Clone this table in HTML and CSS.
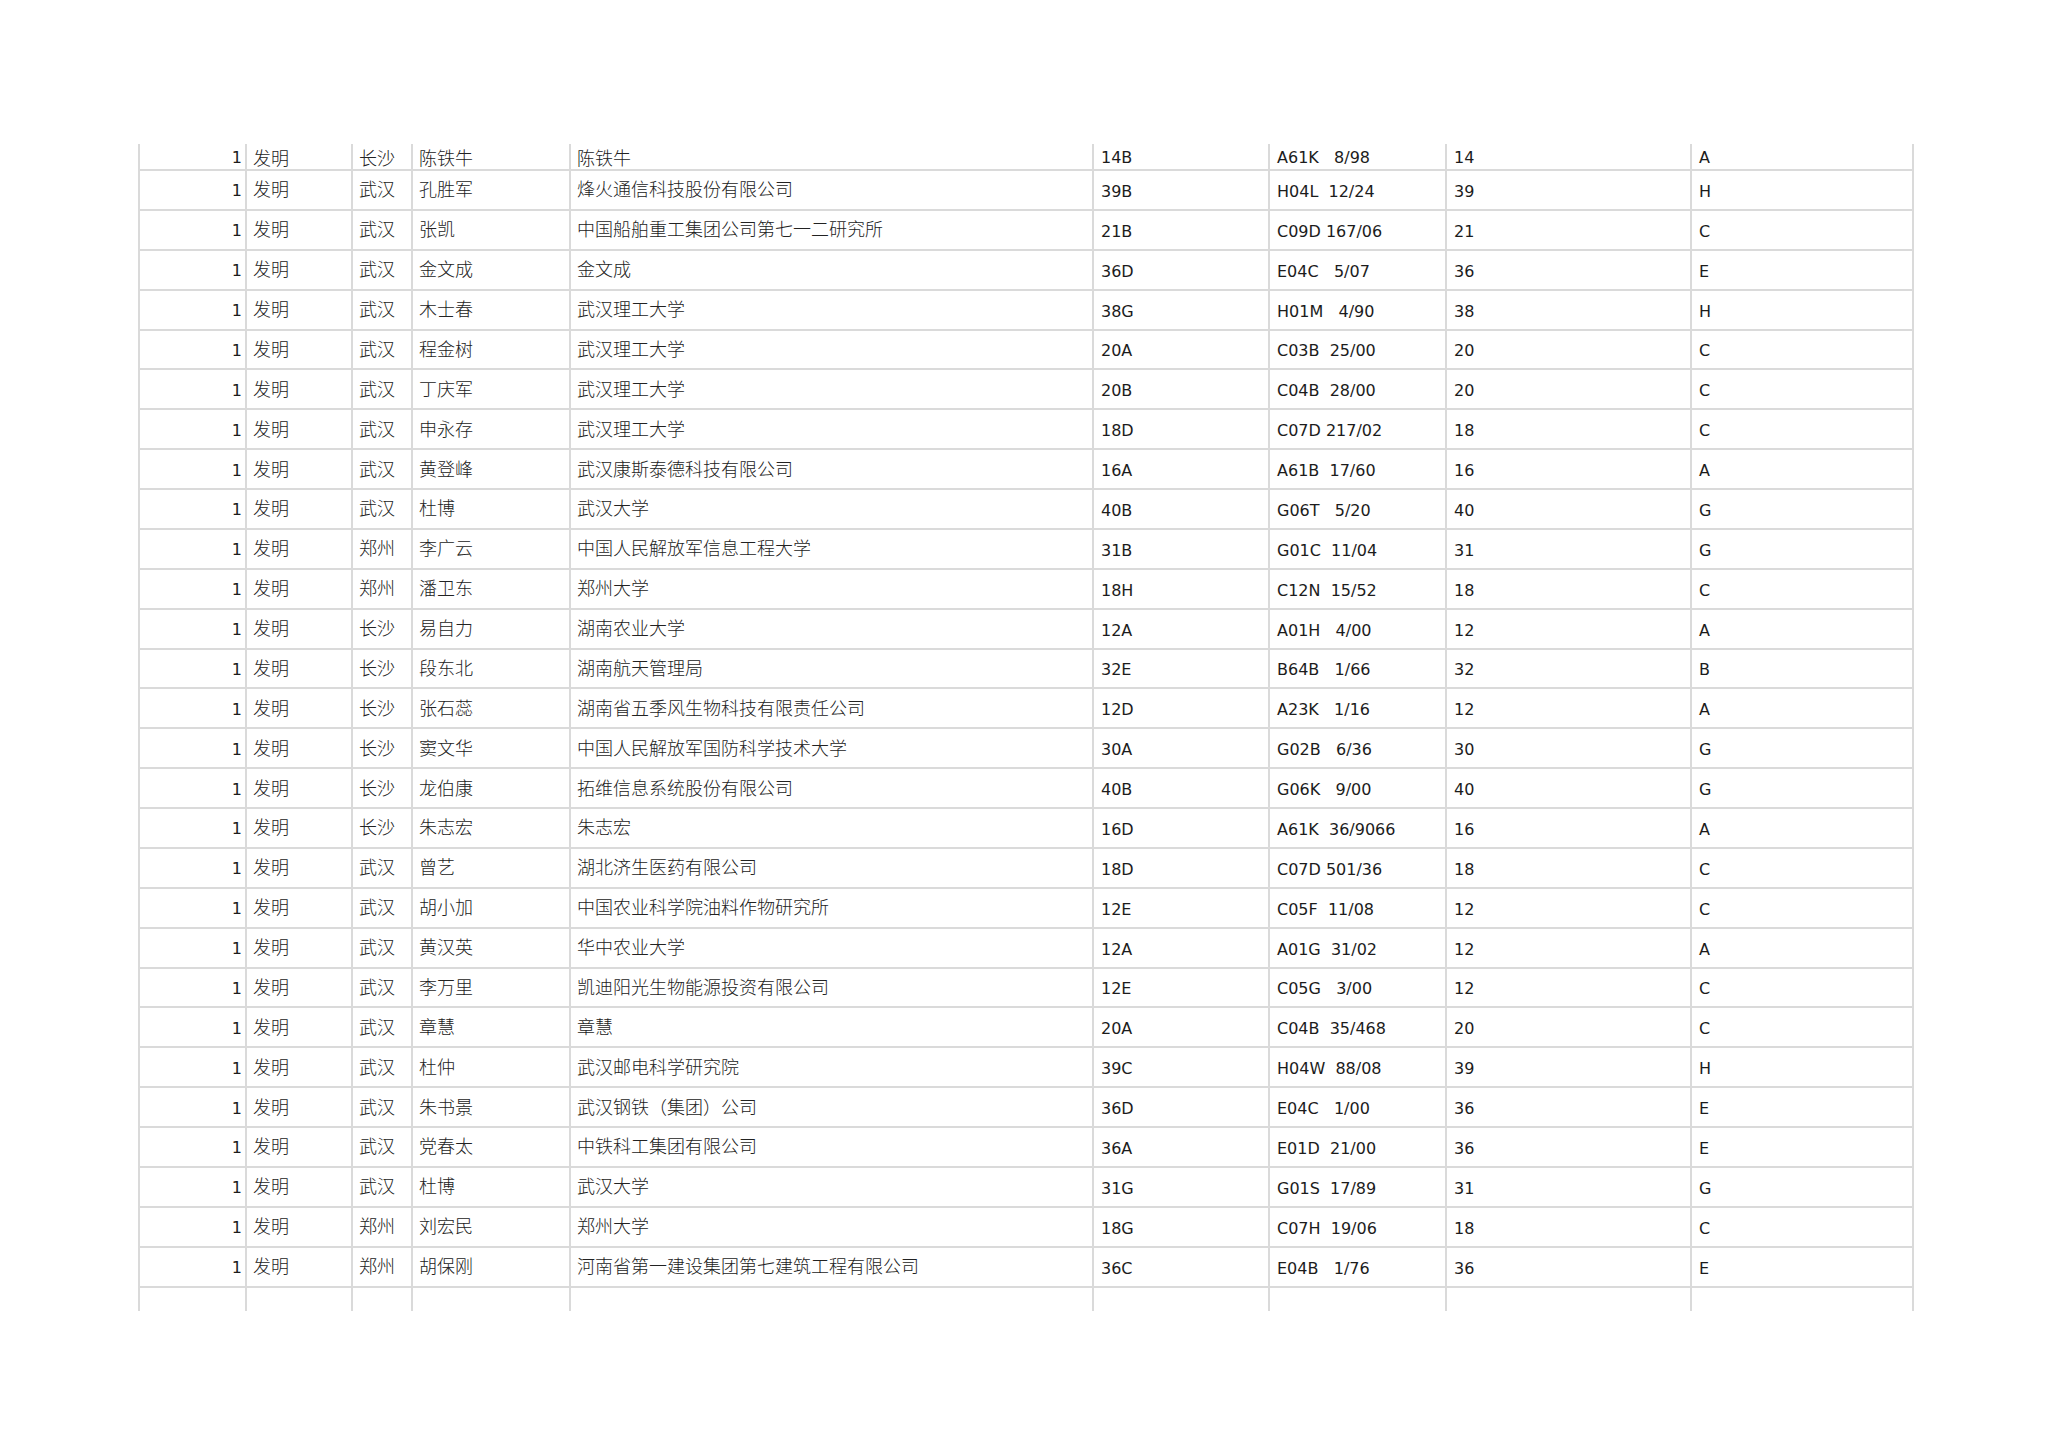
FILE: index.html
```html
<!DOCTYPE html>
<html lang="zh-CN">
<head>
<meta charset="utf-8">
<title>发明专利列表</title>
<link rel="stylesheet" href="styles.css">
</head>
<body>
<div class="sheet">
<table class="grid">
<colgroup>
<col class="c1"><col class="c2"><col class="c3"><col class="c4"><col class="c5"><col class="c6"><col class="c7"><col class="c8"><col class="c9">
</colgroup>
<tbody>
<tr class="first"><td class="n">1</td><td>发明</td><td>长沙</td><td>陈铁牛</td><td>陈铁牛</td><td class="l">14B</td><td class="l ipc">A61K   8/98</td><td class="l">14</td><td class="l">A</td></tr>
<tr><td class="n">1</td><td>发明</td><td>武汉</td><td>孔胜军</td><td>烽火通信科技股份有限公司</td><td class="l">39B</td><td class="l ipc">H04L  12/24</td><td class="l">39</td><td class="l">H</td></tr>
<tr><td class="n">1</td><td>发明</td><td>武汉</td><td>张凯</td><td>中国船舶重工集团公司第七一二研究所</td><td class="l">21B</td><td class="l ipc">C09D 167/06</td><td class="l">21</td><td class="l">C</td></tr>
<tr><td class="n">1</td><td>发明</td><td>武汉</td><td>金文成</td><td>金文成</td><td class="l">36D</td><td class="l ipc">E04C   5/07</td><td class="l">36</td><td class="l">E</td></tr>
<tr><td class="n">1</td><td>发明</td><td>武汉</td><td>木士春</td><td>武汉理工大学</td><td class="l">38G</td><td class="l ipc">H01M   4/90</td><td class="l">38</td><td class="l">H</td></tr>
<tr><td class="n">1</td><td>发明</td><td>武汉</td><td>程金树</td><td>武汉理工大学</td><td class="l">20A</td><td class="l ipc">C03B  25/00</td><td class="l">20</td><td class="l">C</td></tr>
<tr><td class="n">1</td><td>发明</td><td>武汉</td><td>丁庆军</td><td>武汉理工大学</td><td class="l">20B</td><td class="l ipc">C04B  28/00</td><td class="l">20</td><td class="l">C</td></tr>
<tr><td class="n">1</td><td>发明</td><td>武汉</td><td>申永存</td><td>武汉理工大学</td><td class="l">18D</td><td class="l ipc">C07D 217/02</td><td class="l">18</td><td class="l">C</td></tr>
<tr><td class="n">1</td><td>发明</td><td>武汉</td><td>黄登峰</td><td>武汉康斯泰德科技有限公司</td><td class="l">16A</td><td class="l ipc">A61B  17/60</td><td class="l">16</td><td class="l">A</td></tr>
<tr><td class="n">1</td><td>发明</td><td>武汉</td><td>杜博</td><td>武汉大学</td><td class="l">40B</td><td class="l ipc">G06T   5/20</td><td class="l">40</td><td class="l">G</td></tr>
<tr><td class="n">1</td><td>发明</td><td>郑州</td><td>李广云</td><td>中国人民解放军信息工程大学</td><td class="l">31B</td><td class="l ipc">G01C  11/04</td><td class="l">31</td><td class="l">G</td></tr>
<tr><td class="n">1</td><td>发明</td><td>郑州</td><td>潘卫东</td><td>郑州大学</td><td class="l">18H</td><td class="l ipc">C12N  15/52</td><td class="l">18</td><td class="l">C</td></tr>
<tr><td class="n">1</td><td>发明</td><td>长沙</td><td>易自力</td><td>湖南农业大学</td><td class="l">12A</td><td class="l ipc">A01H   4/00</td><td class="l">12</td><td class="l">A</td></tr>
<tr><td class="n">1</td><td>发明</td><td>长沙</td><td>段东北</td><td>湖南航天管理局</td><td class="l">32E</td><td class="l ipc">B64B   1/66</td><td class="l">32</td><td class="l">B</td></tr>
<tr><td class="n">1</td><td>发明</td><td>长沙</td><td>张石蕊</td><td>湖南省五季风生物科技有限责任公司</td><td class="l">12D</td><td class="l ipc">A23K   1/16</td><td class="l">12</td><td class="l">A</td></tr>
<tr><td class="n">1</td><td>发明</td><td>长沙</td><td>窦文华</td><td>中国人民解放军国防科学技术大学</td><td class="l">30A</td><td class="l ipc">G02B   6/36</td><td class="l">30</td><td class="l">G</td></tr>
<tr><td class="n">1</td><td>发明</td><td>长沙</td><td>龙伯康</td><td>拓维信息系统股份有限公司</td><td class="l">40B</td><td class="l ipc">G06K   9/00</td><td class="l">40</td><td class="l">G</td></tr>
<tr><td class="n">1</td><td>发明</td><td>长沙</td><td>朱志宏</td><td>朱志宏</td><td class="l">16D</td><td class="l ipc">A61K  36/9066</td><td class="l">16</td><td class="l">A</td></tr>
<tr><td class="n">1</td><td>发明</td><td>武汉</td><td>曾艺</td><td>湖北济生医药有限公司</td><td class="l">18D</td><td class="l ipc">C07D 501/36</td><td class="l">18</td><td class="l">C</td></tr>
<tr><td class="n">1</td><td>发明</td><td>武汉</td><td>胡小加</td><td>中国农业科学院油料作物研究所</td><td class="l">12E</td><td class="l ipc">C05F  11/08</td><td class="l">12</td><td class="l">C</td></tr>
<tr><td class="n">1</td><td>发明</td><td>武汉</td><td>黄汉英</td><td>华中农业大学</td><td class="l">12A</td><td class="l ipc">A01G  31/02</td><td class="l">12</td><td class="l">A</td></tr>
<tr><td class="n">1</td><td>发明</td><td>武汉</td><td>李万里</td><td>凯迪阳光生物能源投资有限公司</td><td class="l">12E</td><td class="l ipc">C05G   3/00</td><td class="l">12</td><td class="l">C</td></tr>
<tr><td class="n">1</td><td>发明</td><td>武汉</td><td>章慧</td><td>章慧</td><td class="l">20A</td><td class="l ipc">C04B  35/468</td><td class="l">20</td><td class="l">C</td></tr>
<tr><td class="n">1</td><td>发明</td><td>武汉</td><td>杜仲</td><td>武汉邮电科学研究院</td><td class="l">39C</td><td class="l ipc">H04W  88/08</td><td class="l">39</td><td class="l">H</td></tr>
<tr><td class="n">1</td><td>发明</td><td>武汉</td><td>朱书景</td><td>武汉钢铁（集团）公司</td><td class="l">36D</td><td class="l ipc">E04C   1/00</td><td class="l">36</td><td class="l">E</td></tr>
<tr><td class="n">1</td><td>发明</td><td>武汉</td><td>党春太</td><td>中铁科工集团有限公司</td><td class="l">36A</td><td class="l ipc">E01D  21/00</td><td class="l">36</td><td class="l">E</td></tr>
<tr><td class="n">1</td><td>发明</td><td>武汉</td><td>杜博</td><td>武汉大学</td><td class="l">31G</td><td class="l ipc">G01S  17/89</td><td class="l">31</td><td class="l">G</td></tr>
<tr><td class="n">1</td><td>发明</td><td>郑州</td><td>刘宏民</td><td>郑州大学</td><td class="l">18G</td><td class="l ipc">C07H  19/06</td><td class="l">18</td><td class="l">C</td></tr>
<tr><td class="n">1</td><td>发明</td><td>郑州</td><td>胡保刚</td><td>河南省第一建设集团第七建筑工程有限公司</td><td class="l">36C</td><td class="l ipc">E04B   1/76</td><td class="l">36</td><td class="l">E</td></tr>
<tr class="last"><td></td><td></td><td></td><td></td><td></td><td></td><td></td><td></td><td></td></tr>
</tbody>
</table>
</div>
</body>
</html>
```

FILE: styles.css
```css
html, body {
  margin: 0;
  padding: 0;
  background: #ffffff;
}

.sheet {
  padding: 144px 0 0 138px;
}

.grid {
  border-collapse: separate;
  border-spacing: 0;
  table-layout: fixed;
  width: 1776px;
  border-left: 2px solid #dadada;
  font-family: "DejaVu Sans", "Noto Sans CJK SC", sans-serif;
  font-size: 16px;
  color: #1c1c1c;
}

.c1 { width: 107px; }
.c2 { width: 106px; }
.c3 { width: 60px; }
.c4 { width: 158px; }
.c5 { width: 523px; }
.c6 { width: 176px; }
.c7 { width: 177px; }
.c8 { width: 245px; }
.c9 { width: 222px; }

.grid td {
  box-sizing: border-box;
  height: 39.88px;
  padding: 0 0 3px 6px;
  border-right: 2px solid #dadada;
  border-bottom: 2px solid #dadada;
  vertical-align: middle;
  white-space: nowrap;
  line-height: 20px;
  font-family: "Noto Sans CJK SC", sans-serif;
  font-size: 18px;
  font-weight: 300;
  color: #222222;
}

.grid td.n {
  text-align: right;
  padding: 3px 3px 0 0;
  font-family: "DejaVu Sans", sans-serif;
  font-size: 16px;
  font-weight: 400;
  color: #1c1c1c;
}

.grid td.l {
  padding: 4px 0 0 7px;
  font-family: "DejaVu Sans", sans-serif;
  font-size: 16px;
  font-weight: 400;
  color: #1c1c1c;
}

.grid td.ipc {
  white-space: pre;
}

.grid tr.first td {
  height: 27px;
  padding-bottom: 0;
}

.grid tr.first td.n,
.grid tr.first td.l {
  padding-top: 3px;
}

.grid tr.last td {
  height: 23px;
  border-bottom: none;
}
```
